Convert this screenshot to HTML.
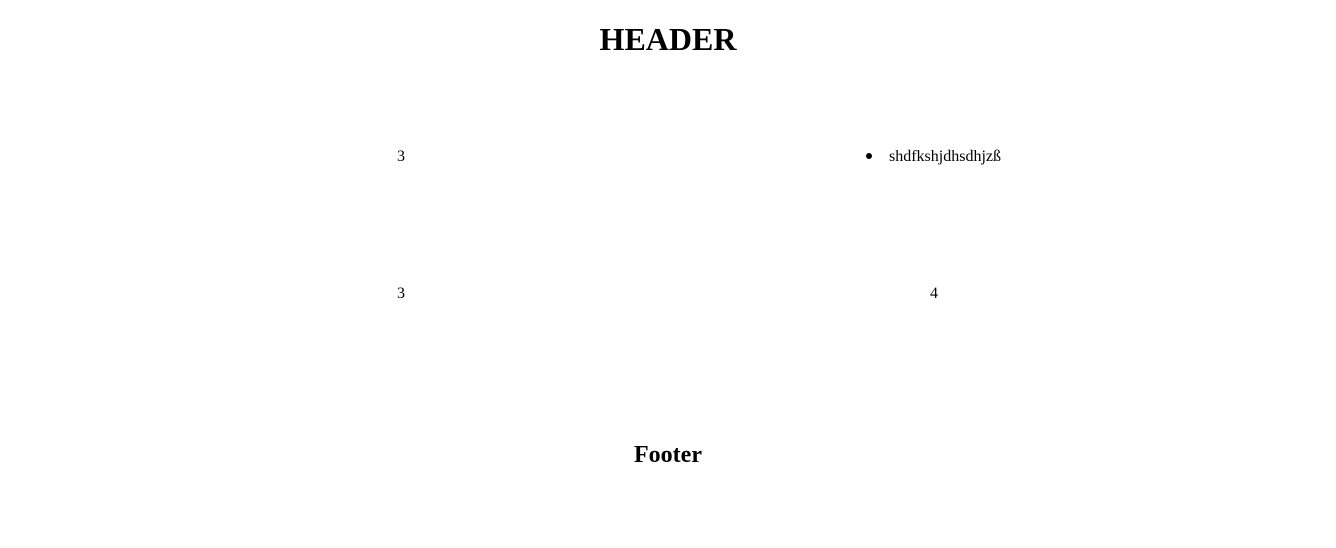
<!DOCTYPE html>
<html><head><style>
body{margin:0;width:1336px;height:548px;background:#fff;font-family:"Liberation Serif",serif;font-size:16px;color:#000;position:relative;overflow:hidden}
.a{position:absolute;white-space:nowrap;line-height:18px}
</style></head><body>
<div class="a" style="left:0;width:1336px;text-align:center;top:21px;font-size:32px;font-weight:bold;line-height:37px">HEADER</div>
<div class="a" style="left:381px;width:40px;text-align:center;top:148px">3</div>
<div style="position:absolute;left:866px;top:153px;width:6px;height:6px;border-radius:50%;background:#000"></div>
<div class="a" style="left:889px;top:148px">shdfkshjdhsdhjzß</div>
<div class="a" style="left:381px;width:40px;text-align:center;top:285px">3</div>
<div class="a" style="left:914px;width:40px;text-align:center;top:285px">4</div>
<div class="a" style="left:0;width:1336px;text-align:center;top:441px;font-size:24px;font-weight:bold;line-height:28px">Footer</div>
</body></html>
